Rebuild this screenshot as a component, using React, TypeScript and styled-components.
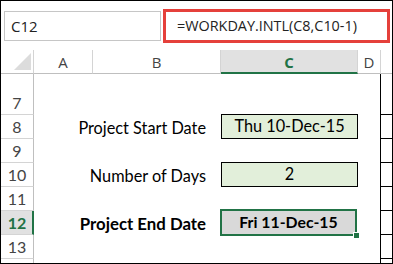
import React from "react";
import styled, { createGlobalStyle, css } from "styled-components";

const Global = createGlobalStyle`
  html, body { margin: 0; padding: 0; background: #fff; }
  #root { width: 393px; height: 264px; }
`;

const GREEN = "#217346";

const Frame = styled.div`
  width: 393px;
  height: 264px;
  box-sizing: border-box;
  border: 1px solid #000;
  background: #fff;
  display: flex;
  flex-direction: column;
  overflow: hidden;
`;

const FormulaBar = styled.div`
  height: 49px;
  flex: none;
  display: flex;
  align-items: center;
  padding-left: 3px;
  gap: 2px;
`;

const NameBox = styled.div`
  width: 157px;
  height: 30px;
  box-sizing: border-box;
  border: 1px solid #c6c6c6;
  padding-left: 6px;
  display: flex;
  align-items: center;
  font-family: "Open Sans", sans-serif;
  font-size: 15px;
  color: #222;
`;

const FormulaBox = styled.div`
  width: 227px;
  height: 34px;
  box-sizing: border-box;
  border: 3px solid #e5403b;
  padding-left: 11px;
  display: flex;
  align-items: center;
  font-family: "Open Sans", sans-serif;
  font-size: 14.4px;
  color: #222;
  white-space: nowrap;
`;

const Sheet = styled.div`
  flex: 1;
  display: grid;
  grid-template-columns: 33px 59px 128px 137px 23px 1fr;
  grid-template-rows: 24px 41px repeat(6, 24px) 1fr;
  font-family: Lato, "Open Sans", sans-serif;
  font-size: 16.3px;
`;

const Corner = styled.div`
  box-sizing: border-box;
  border-right: 1px solid #d4d4d4;
  border-bottom: 1px solid #bfbfbf;
  display: flex;
  align-items: flex-end;
  justify-content: flex-end;
  padding: 0 2px 3px 0;
`;

const Triangle = styled.div`
  width: 0;
  height: 0;
  border-left: 17px solid transparent;
  border-bottom: 17px solid #dcdcdc;
`;

const ColHead = styled.div<{ $active?: boolean; $last?: boolean }>`
  box-sizing: border-box;
  border-right: ${(p) => (p.$last ? "none" : "1px solid #d4d4d4")};
  border-bottom: 1px solid #bfbfbf;
  display: flex;
  align-items: center;
  justify-content: center;
  font-family: "Open Sans", sans-serif;
  font-size: 15px;
  color: #444;
  ${(p) =>
    p.$active &&
    css`
      background: #e1e1e1;
      border-bottom: 2px solid ${GREEN};
      color: ${GREEN};
      font-weight: 700;
      padding-top: 1px;
    `}
`;

const RowHead = styled.div<{ $active?: boolean }>`
  box-sizing: border-box;
  border-right: 1px solid #bfbfbf;
  border-bottom: 1px solid #d4d4d4;
  display: flex;
  align-items: flex-end;
  justify-content: center;
  padding-bottom: 2px;
  line-height: 18px;
  font-size: 16px;
  color: #444;
  ${(p) =>
    p.$active &&
    css`
      background: #e1e1e1;
      border-right: 2px solid ${GREEN};
      color: ${GREEN};
      font-weight: 700;
      padding-left: 1px;
    `}
`;

const Cell = styled.div<{ $edge?: boolean }>`
  box-sizing: border-box;
  border-right: ${(p) => (p.$edge ? "1px solid #bfbfbf" : "none")};
`;

const Label = styled.div<{ $bold?: boolean }>`
  display: flex;
  align-items: flex-end;
  justify-content: flex-end;
  padding: 0 15px 2px 0;
  line-height: 18px;
  color: #000;
  white-space: nowrap;
  font-weight: ${(p) => (p.$bold ? 700 : 400)};
  font-size: ${(p) => (p.$bold ? "16.8px" : "16.3px")};
`;

const ValueBox = styled.div`
  margin-top: -1px;
  height: 25px;
  box-sizing: border-box;
  border: 1px solid #000;
  background: #e2efda;
  display: flex;
  align-items: flex-end;
  justify-content: center;
  padding-bottom: 3px;
  line-height: 18px;
  color: #000;
  white-space: nowrap;
`;

const SelectedBox = styled.div`
  position: relative;
  margin: -2px 0 0 -1px;
  width: 137px;
  height: 27px;
  box-sizing: border-box;
  border: 2px solid ${GREEN};
  background: #d9d9d9;
  display: flex;
  align-items: flex-end;
  justify-content: center;
  padding-bottom: 3px;
  line-height: 18px;
  font-weight: 700;
  font-size: 15.8px;
  color: #000;
  white-space: nowrap;
`;

const FillHandle = styled.span`
  position: absolute;
  right: -4px;
  bottom: -4px;
  width: 5px;
  height: 5px;
  background: ${GREEN};
  border-left: 1px solid #fff;
  border-top: 1px solid #fff;
`;

const DCell = styled.div`
  border-right: 1px solid #000;
`;

const ECell = styled.div<{ $last?: boolean }>`
  border-bottom: ${(p) => (p.$last ? "none" : "1px solid #000")};
`;

type Row = {
  num: string;
  label?: string;
  value?: string;
  kind?: "input" | "result";
};

const rows: Row[] = [
  { num: "7" },
  { num: "8", label: "Project Start Date", value: "Thu 10-Dec-15", kind: "input" },
  { num: "9" },
  { num: "10", label: "Number of Days", value: "2", kind: "input" },
  { num: "11" },
  { num: "12", label: "Project End Date", value: "Fri 11-Dec-15", kind: "result" },
  { num: "13" },
  { num: "" },
];

export default function App() {
  return (
    <>
      <Global />
      <Frame>
        <FormulaBar>
          <NameBox>C12</NameBox>
          <FormulaBox>=WORKDAY.INTL(C8,C10-1)</FormulaBox>
        </FormulaBar>
        <Sheet>
          <Corner>
            <Triangle />
          </Corner>
          <ColHead>A</ColHead>
          <ColHead>B</ColHead>
          <ColHead $active>C</ColHead>
          <ColHead>D</ColHead>
          <ColHead $last />
          {rows.map((r, i) => {
            const isLast = i === rows.length - 1;
            const active = r.kind === "result";
            return (
              <React.Fragment key={i}>
                {isLast ? <Cell $edge /> : <RowHead $active={active}>{r.num}</RowHead>}
                <Cell />
                {r.label ? <Label $bold={active}>{r.label}</Label> : <Cell />}
                {r.kind === "input" ? (
                  <ValueBox>{r.value}</ValueBox>
                ) : r.kind === "result" ? (
                  <SelectedBox>
                    {r.value}
                    <FillHandle />
                  </SelectedBox>
                ) : (
                  <Cell />
                )}
                <DCell />
                <ECell $last={isLast} />
              </React.Fragment>
            );
          })}
        </Sheet>
      </Frame>
    </>
  );
}
